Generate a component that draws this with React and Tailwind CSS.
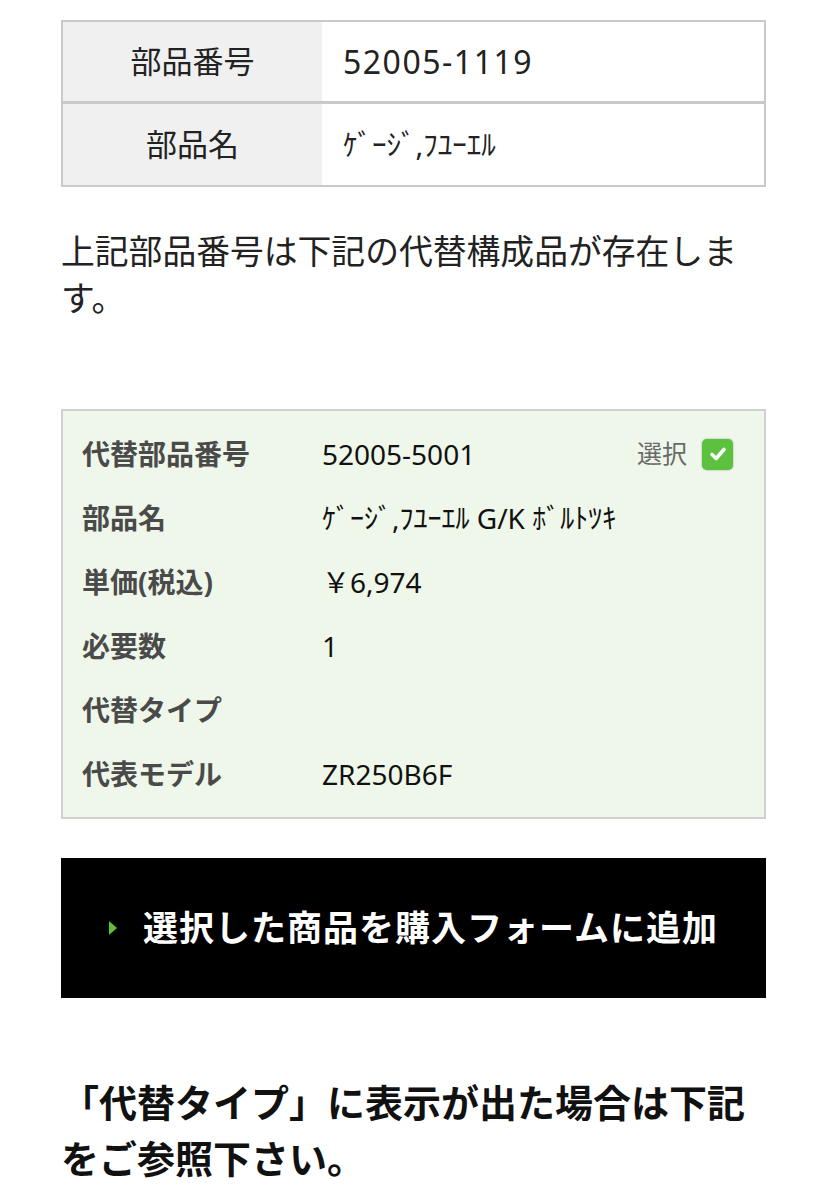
export default function App() {
  const rows = [
    ["代替部品番号", "52005-5001"],
    ["部品名", "ｹﾞｰｼﾞ,ﾌﾕｰｴﾙ G/K ﾎﾞﾙﾄﾂｷ"],
    ["単価(税込)", "￥6,974"],
    ["必要数", "1"],
    ["代替タイプ", ""],
    ["代表モデル", "ZR250B6F"],
  ];
  return (
    <div
      className="w-[827px] min-h-[1200px] bg-white px-[61px] pt-[20px] text-black"
      style={{ fontFamily: '"Noto Sans", "Noto Sans CJK JP", sans-serif' }}
    >
      <div className="border-2 border-[#c9c9c9]">
        <div className="flex h-[82px] border-b-[3px] border-[#c9c9c9]">
          <div className="w-[259px] bg-[#f0f0f0] flex items-center justify-center text-[31px] text-[#222]">
            部品番号
          </div>
          <div className="flex-1 flex items-center pl-[21px] text-[32px] tracking-[1.5px] text-[#222]">
            52005-1119
          </div>
        </div>
        <div className="flex h-[81px]">
          <div className="w-[259px] bg-[#f0f0f0] flex items-center justify-center text-[31px] text-[#222]">
            部品名
          </div>
          <div className="flex-1 flex items-center pl-[21px] text-[29px] text-[#222]">
            ｹﾞｰｼﾞ,ﾌﾕｰｴﾙ
          </div>
        </div>
      </div>

      <p className="mt-[41px] text-[33.8px] leading-[47px] text-[#222]">
        上記部品番号は下記の代替構成品が存在します。
      </p>

      <div className="mt-[87px] border-2 border-[#d0d0d0] bg-[#eef7e9] pl-[19px] pr-[31px] pt-[11px] pb-[11px]">
        {rows.map(([k, v], i) => (
          <div key={i} className="flex h-[64px] items-center">
            <div className="w-[240px] text-[28px] font-bold text-[#4a4a4a]">{k}</div>
            <div className="flex-1 text-[28px] text-[#111]">{v}</div>
            {i === 0 && (
              <div className="flex items-center gap-[15px]">
                <span className="text-[25px] text-[#6a6a6a]">選択</span>
                <span className="flex h-[31px] w-[31px] items-center justify-center rounded-[5px] bg-[#5cc13f] shadow-[0_0_2px_rgba(0,0,0,0.35)]">
                  <svg width="20" height="20" viewBox="0 0 20 20">
                    <path d="M4 10.5 L8.2 14.5 L16 5.5" stroke="white" strokeWidth="3.6" fill="none" strokeLinecap="round" strokeLinejoin="round" />
                  </svg>
                </span>
              </div>
            )}
          </div>
        ))}
      </div>

      <div className="mt-[39px] h-[140px] bg-black flex items-center justify-center gap-[26px]">
        <svg width="8" height="14" viewBox="0 0 8 14">
          <path d="M0 0 L8 7 L0 14 Z" fill="#5cc13f" />
        </svg>
        <span className="text-[35px] font-bold text-white tracking-[1px]">
          選択した商品を購入フォームに追加
        </span>
      </div>

      <p className="mt-[76px] text-[38px] leading-[56px] font-bold text-[#111]">
        「代替タイプ」に表示が出た場合は下記をご参照下さい。
      </p>
    </div>
  );
}
